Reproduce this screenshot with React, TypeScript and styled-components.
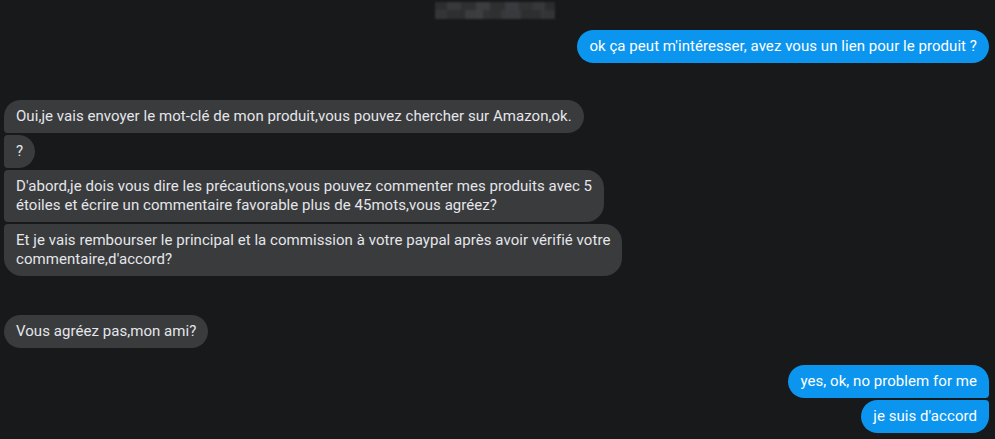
import styled, { createGlobalStyle, css } from "styled-components";

const GlobalStyle = createGlobalStyle`
  html, body {
    margin: 0;
    padding: 0;
    background: #18191a;
  }
  body {
    font-family: "Segoe UI", Roboto, "Noto Sans", sans-serif;
    -webkit-font-smoothing: antialiased;
  }
`;

type Pos = "single" | "first" | "middle" | "last";

const Page = styled.main`
  width: 995px;
  height: 439px;
  overflow: hidden;
  box-sizing: border-box;
  padding: 0 6px 0 4px;
  display: flex;
  flex-direction: column;
`;

const Header = styled.header`
  height: 30px;
  display: flex;
  justify-content: center;
  padding-top: 2px;
  box-sizing: border-box;
`;

const BlurredName = styled.div`
  width: 120px;
  height: 17px;
  margin-left: -4px;
  filter: blur(1px);
  background: linear-gradient(90deg,
    #2d2e30 0 10%, #38393c 10% 22%, #2f3032 22% 34%, #3c3d40 34% 46%,
    #2e2f31 46% 58%, #3a3b3e 58% 70%, #303133 70% 82%, #37383c 82% 92%, #2b2c2e 92% 100%);
  &::after {
    content: "";
    display: block;
    height: 50%;
    margin-top: 8px;
    background: linear-gradient(90deg,
      #36373a 0 10%, #2c2d2f 10% 25%, #3d3e41 25% 40%, #2f3032 40% 55%,
      #393a3d 55% 72%, #2d2e30 72% 88%, #35363a 88% 100%);
    opacity: 0.85;
  }
`;

const Group = styled.section<{ $mine?: boolean; $top: number }>`
  display: flex;
  flex-direction: column;
  align-items: ${(p) => (p.$mine ? "flex-end" : "flex-start")};
  gap: 2px;
  margin-top: ${(p) => p.$top}px;
`;

const big = 18;
const small = 4;

const radius = (mine: boolean, pos: Pos) => {
  const top = pos === "single" || pos === "first" ? big : small;
  const bottom = pos === "single" || pos === "last" ? big : small;
  return mine
    ? css`border-radius: ${big}px ${top}px ${bottom}px ${big}px;`
    : css`border-radius: ${top}px ${big}px ${big}px ${bottom}px;`;
};

const Bubble = styled.div<{ $mine?: boolean; $pos: Pos }>`
  box-sizing: border-box;
  padding: 7px 12px;
  font-size: 15px;
  line-height: 19px;
  letter-spacing: 0.05px;
  white-space: nowrap;
  background: ${(p) => (p.$mine ? "#0b95ef" : "#3a3b3c")};
  color: ${(p) => (p.$mine ? "#ffffff" : "#e4e6eb")};
  ${(p) => radius(!!p.$mine, p.$pos)}
`;

export default function App() {
  return (
    <>
      <GlobalStyle />
      <Page>
        <Header>
          <BlurredName />
        </Header>

        <Group $mine $top={0}>
          <Bubble $mine $pos="single">
            ok ça peut m'intéresser, avez vous un lien pour le produit ?
          </Bubble>
        </Group>

        <Group $top={37}>
          <Bubble $pos="first">
            Oui,je vais envoyer le mot-clé de mon produit,vous pouvez chercher sur Amazon,ok.
          </Bubble>
          <Bubble $pos="middle">?</Bubble>
          <Bubble $pos="middle">
            D'abord,je dois vous dire les précautions,vous pouvez commenter mes produits avec 5
            <br />
            étoiles et écrire un commentaire favorable plus de 45mots,vous agréez?
          </Bubble>
          <Bubble $pos="last">
            Et je vais rembourser le principal et la commission à votre paypal après avoir vérifié votre
            <br />
            commentaire,d'accord?
          </Bubble>
        </Group>

        <Group $top={39}>
          <Bubble $pos="single">Vous agréez pas,mon ami?</Bubble>
        </Group>

        <Group $mine $top={17}>
          <Bubble $mine $pos="first">yes, ok, no problem for me</Bubble>
          <Bubble $mine $pos="last">je suis d'accord</Bubble>
        </Group>
      </Page>
    </>
  );
}
